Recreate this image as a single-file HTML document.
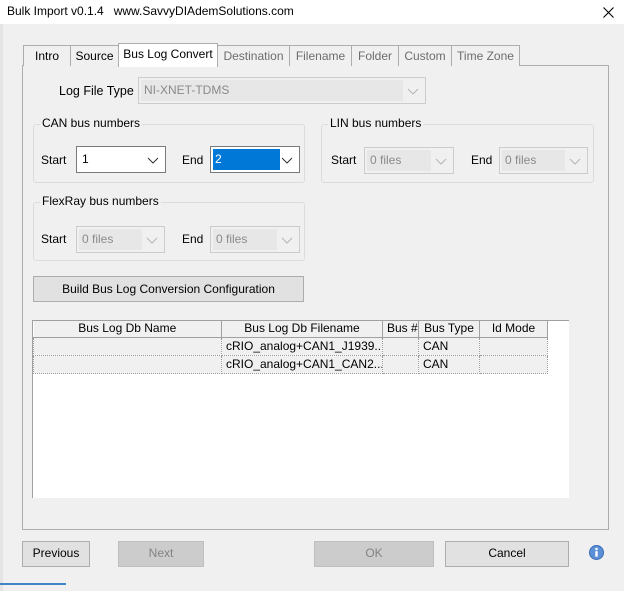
<!DOCTYPE html>
<html><head><meta charset="utf-8"><style>
*{box-sizing:border-box;margin:0;padding:0}
body{width:624px;height:591px;background:#f0f0f0;font-family:"Liberation Sans",sans-serif;font-size:12px;color:#000;position:relative;overflow:hidden}
.a{position:absolute}
.t{position:absolute;white-space:nowrap}
.tab{position:absolute;top:45px;height:21px;border:1px solid #adadad;border-bottom:none;background:#f0f0f0;text-align:center;line-height:20px;color:#6d6d6d}
.combo{position:absolute;border:1px solid #7a7a7a;background:#fff;height:27px;line-height:25px;padding-left:5px}
.combo.dis{border-color:#cccccc;background:#f0f0f0;color:#8a8a8a}
.combo.dis .in{position:absolute;left:2px;top:2px;bottom:2px;right:22px;background:#e7e7e7}
.chev{position:absolute;right:6px;top:10px;width:12px;height:7px}
.grp{position:absolute;border:1px solid #dcdcdc;border-radius:3px}
.grp .lbl{position:absolute;top:-9px;left:6px;background:#f0f0f0;padding:0 2px;font-size:12px}
.btn{position:absolute;border:1px solid #adadad;background:#e1e1e1;text-align:center;line-height:23px}
.btn.dis{background:#cccccc;border-color:#bfbfbf;color:#838383}
td,th{font-weight:normal;font-size:12px;padding:0 4px;white-space:nowrap;overflow:hidden;line-height:15px}
</style></head><body>
<div class="a" style="left:0;top:0;width:624px;height:24px;background:#fff"></div>
<div class="t" style="left:7px;top:4px;font-size:12px">Bulk Import v0.1.4&nbsp;&nbsp; www.SavvyDIAdemSolutions.com</div>
<svg class="a" style="left:603px;top:7px" width="11" height="11"><path d="M0.5 0.5L10.5 10.5M10.5 0.5L0.5 10.5" stroke="#000" stroke-width="1.1"/></svg>
<div class="a" style="left:0;top:24px;width:3px;height:567px;background:#e4e4e4"></div>
<div class="a" style="left:0;top:583px;width:66px;height:2px;background:#3c86c7"></div>

<div class="a" style="left:22px;top:65px;width:587px;height:465px;border:1px solid #adadad;background:#f0f0f0"></div>
<div class="tab" style="left:23px;width:48px;color:#000">Intro</div>
<div class="tab" style="left:70px;width:49px;color:#000">Source</div>
<div class="tab" style="left:289px;width:63px">Filename</div>
<div class="tab" style="left:351px;width:48px">Folder</div>
<div class="tab" style="left:398px;width:54px">Custom</div>
<div class="tab" style="left:451px;width:69px">Time Zone</div>
<div class="tab" style="left:217px;width:73px">Destination</div>
<div class="tab" style="left:118px;top:43px;height:24px;width:100px;background:#fff;color:#000;line-height:20px">Bus Log Convert</div>

<div class="t" style="left:59px;top:84px;font-size:12.5px">Log File Type</div>
<div class="combo dis" style="left:138px;top:77px;width:288px;color:#8a8a8a"><div class="in"></div><span style="position:relative">NI-XNET-TDMS</span><svg class="chev" viewBox="0 0 12 7"><path d="M1 1L6 6L11 1" fill="none" stroke="#b5b5b5"/></svg></div>

<div class="grp" style="left:33px;top:124px;width:272px;height:59px"><span class="lbl">CAN bus numbers</span></div>
<div class="t" style="left:41px;top:153px">Start</div>
<div class="combo" style="left:76px;top:146px;width:90px">1<svg class="chev" viewBox="0 0 12 7"><path d="M1 1L6 6L11 1" fill="none" stroke="#333"/></svg></div>
<div class="t" style="left:182px;top:153px">End</div>
<div class="combo" style="left:210px;top:146px;width:90px;padding-left:0"><div class="a" style="left:2px;top:2px;width:67px;height:21px;background:#0078d7;color:#fff;line-height:21px;padding-left:2px">2</div><svg class="chev" viewBox="0 0 12 7"><path d="M1 1L6 6L11 1" fill="none" stroke="#333"/></svg></div>

<div class="grp" style="left:321px;top:124px;width:273px;height:59px"><span class="lbl">LIN bus numbers</span></div>
<div class="t" style="left:331px;top:153px">Start</div>
<div class="combo dis" style="left:364px;top:147px;width:90px"><div class="in"></div><span style="position:relative">0 files</span><svg class="chev" viewBox="0 0 12 7"><path d="M1 1L6 6L11 1" fill="none" stroke="#b5b5b5"/></svg></div>
<div class="t" style="left:471px;top:153px">End</div>
<div class="combo dis" style="left:499px;top:147px;width:89px"><div class="in"></div><span style="position:relative">0 files</span><svg class="chev" viewBox="0 0 12 7"><path d="M1 1L6 6L11 1" fill="none" stroke="#b5b5b5"/></svg></div>

<div class="grp" style="left:33px;top:202px;width:272px;height:59px"><span class="lbl">FlexRay bus numbers</span></div>
<div class="t" style="left:41px;top:232px">Start</div>
<div class="combo dis" style="left:76px;top:226px;width:89px"><div class="in"></div><span style="position:relative">0 files</span><svg class="chev" viewBox="0 0 12 7"><path d="M1 1L6 6L11 1" fill="none" stroke="#b5b5b5"/></svg></div>
<div class="t" style="left:182px;top:232px">End</div>
<div class="combo dis" style="left:210px;top:226px;width:90px"><div class="in"></div><span style="position:relative">0 files</span><svg class="chev" viewBox="0 0 12 7"><path d="M1 1L6 6L11 1" fill="none" stroke="#b5b5b5"/></svg></div>

<div class="btn" style="left:33px;top:276px;width:271px;height:26px;line-height:24px">Build Bus Log Conversion Configuration</div>

<div class="a" style="left:32px;top:320px;width:537px;height:178px;background:#fff;border-left:1px solid #a0a0a0;border-top:1px solid #a0a0a0"></div>
<table class="a" style="left:33px;top:321px;border-collapse:collapse;table-layout:fixed;width:514px">
<colgroup><col style="width:188px"><col style="width:161px"><col style="width:36px"><col style="width:61px"><col style="width:68px"></colgroup>
<tr style="background:#f0f0f0;height:16px"><th style="border-right:1px solid #a0a0a0;border-bottom:1px solid #a0a0a0">Bus Log Db Name</th><th style="border-right:1px solid #a0a0a0;border-bottom:1px solid #a0a0a0">Bus Log Db Filename</th><th style="border-right:1px solid #a0a0a0;border-bottom:1px solid #a0a0a0">Bus #</th><th style="border-right:1px solid #a0a0a0;border-bottom:1px solid #a0a0a0">Bus Type</th><th style="border-right:1px solid #a0a0a0;border-bottom:1px solid #a0a0a0">Id Mode</th></tr>
<tr style="background:#f0f0f0;height:18px"><td style="border:1px dotted #999"></td><td style="border:1px dotted #999">cRIO_analog+CAN1_J1939....</td><td style="border:1px dotted #999"></td><td style="border:1px dotted #999">CAN</td><td style="border:1px dotted #999"></td></tr>
<tr style="background:#f0f0f0;height:18px"><td style="border:1px dotted #999"></td><td style="border:1px dotted #999">cRIO_analog+CAN1_CAN2...</td><td style="border:1px dotted #999"></td><td style="border:1px dotted #999">CAN</td><td style="border:1px dotted #999"></td></tr>
</table>

<div class="btn" style="left:22px;top:541px;width:68px;height:26px">Previous</div>
<div class="btn dis" style="left:118px;top:541px;width:86px;height:26px">Next</div>
<div class="btn dis" style="left:314px;top:541px;width:120px;height:26px">OK</div>
<div class="btn" style="left:445px;top:541px;width:124px;height:26px">Cancel</div>
<svg class="a" style="left:589px;top:545px" width="15" height="15" viewBox="0 0 15 15"><circle cx="7.5" cy="7.5" r="7" fill="#5b8fd6" stroke="#3a6db5"/><circle cx="7.5" cy="4" r="1.3" fill="#fff"/><rect x="6.3" y="6.2" width="2.4" height="5.5" fill="#fff"/></svg>
</body></html>
